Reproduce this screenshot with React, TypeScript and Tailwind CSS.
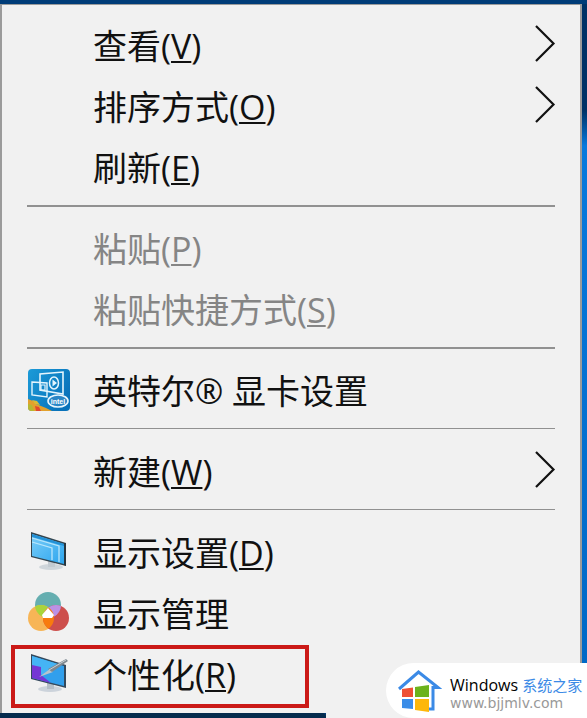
import type { ReactNode } from "react";
import { clsx } from "clsx";

// --- Icons ---

function IntelIcon() {
  return (
    <svg viewBox="0 0 42 42" className="size-[42px]" aria-hidden="true">
      <defs>
        <linearGradient id="intel-bg" x1="0" y1="0" x2="1" y2="0.6">
          <stop offset="0" stopColor="#1c9bd8" />
          <stop offset="1" stopColor="#0872ba" />
        </linearGradient>
        <clipPath id="intel-clip">
          <rect width="42" height="42" rx="4" />
        </clipPath>
      </defs>
      <g clipPath="url(#intel-clip)">
        <rect width="42" height="42" fill="url(#intel-bg)" />
        <path d="M0 30 5 32 8 35 13 37 18 39 24 42H0z" fill="#e2a12c" />
        <path d="M0 35 4 36 6 42H0z" fill="#b5b832" />
        <path d="M7 37l4 1 2 4H8z" fill="#e0492c" />
        <path d="M4 31l5 1 3 4-5-1z" fill="#d9bb35" />
      </g>
      <g fill="none" stroke="#e4f5fd">
        <path d="M12 13V5L35 3V25L12 21V13" strokeWidth="1.6" />
        <path d="M4 13 19 14V28L4 26z" strokeWidth="1.4" />
        <ellipse cx="26" cy="14" rx="4.5" ry="6" strokeWidth="1.5" />
        <path d="M13 16h4v5h-4z" strokeWidth="1.2" />
      </g>
      <path d="M24.500 10.500 29 14l-4.500 3.500z" fill="#e4f5fd" />
      <ellipse cx="30" cy="32" rx="10" ry="6" fill="#2a86c6" stroke="#e8f6fd" strokeWidth="1.6" />
      <text
        x="30"
        y="35"
        textAnchor="middle"
        fontSize="7"
        fontWeight="700"
        fontFamily="Liberation Sans, sans-serif"
        fill="#fff"
      >
        intel
      </text>
    </svg>
  );
}

function MonitorIcon() {
  return (
    <svg viewBox="0 0 42 42" className="size-[42px]" aria-hidden="true">
      <defs>
        <linearGradient id="screen" x1="0" y1="0" x2="1" y2="1">
          <stop offset="0" stopColor="#79cdf8" />
          <stop offset="1" stopColor="#2ca5ee" />
        </linearGradient>
      </defs>
      <ellipse cx="23" cy="36" rx="12" ry="3" fill="#cfd6db" />
      <path d="M20 30h7v6h-7z" fill="#c3cbd1" />
      <path d="M3 1 38 12V35L3 26z" fill="#34454f" />
      <path d="M4 3 36 13V33L4 25z" fill="url(#screen)" />
      <path d="M4 3 36 13V15L4 6z" fill="#2291d7" />
      <g fill="none" stroke="#b9e6fb" strokeWidth="1.3">
        <path d="M4 7 31 15V31" />
        <path d="M4 11 24 17V29" />
      </g>
      <path d="M36 12h2v23l-2-1z" fill="#28363e" />
    </svg>
  );
}

function ColorsIcon() {
  return (
    <svg viewBox="0 0 42 42" className="size-[42px]" aria-hidden="true">
      <defs>
        <clipPath id="teal">
          <circle cx="20" cy="13" r="13" />
        </clipPath>
        <clipPath id="amber">
          <circle cx="13" cy="26" r="13" />
        </clipPath>
      </defs>
      <circle cx="20" cy="13" r="13" fill="#65aeb0" />
      <circle cx="13" cy="26" r="13" fill="#f7b556" />
      <circle cx="28" cy="26" r="13" fill="#cd4f4c" />
      <circle cx="13" cy="26" r="13" fill="#a9d43b" clipPath="url(#teal)" />
      <circle cx="28" cy="26" r="13" fill="#bb91e4" clipPath="url(#teal)" />
      <g clipPath="url(#amber)">
        <circle cx="28" cy="26" r="13" fill="#f87b0e" />
      </g>
      <path d="M20 16 26 23 24 26H15L14 23z" fill="#fff" />
    </svg>
  );
}

function PersonalizeIcon() {
  return (
    <svg viewBox="0 0 42 42" className="size-[42px]" aria-hidden="true">
      <ellipse cx="22" cy="36" rx="12" ry="3" fill="#ccd3db" />
      <path d="M19 30h7v6h-7z" fill="#b5bec7" />
      <path d="M3 1 38 12V35L3 26z" fill="#34495c" />
      <path d="M4 3 36 13V33L4 25z" fill="#319fec" />
      <path d="M4 3 30 11 15 22 4 19z" fill="#45b4f5" />
      <path d="M4 12 13 14V22L23 30 4 25z" fill="#7536d4" />
      <path d="M11 24 22 16 25 19z" fill="#b9c2cc" />
      <path d="M20 16 38 6 40 8 24 19z" fill="#7d8890" />
      <path d="M21 17 38 7" stroke="#c7ced3" strokeWidth="1" />
    </svg>
  );
}

function Chevron() {
  return (
    <svg
      viewBox="0 0 22 40"
      className="h-10 w-[22px]"
      fill="none"
      stroke="#111"
      strokeWidth="2.200"
      aria-hidden="true"
    >
      <path d="M2 1 19.500 18.500 2 36" />
    </svg>
  );
}

function HouseLogo() {
  return (
    <svg viewBox="0 0 44 44" className="size-11 shrink-0" aria-hidden="true">
      <path
        d="M1 20 20.500 3 40 18.500H35V40H31"
        fill="none"
        stroke="#3b8ae6"
        strokeWidth="3"
      />
      <path d="M4 20 15 18.500V28H4z" fill="#ee5035" />
      <path d="M17 18 31 16V28H17z" fill="#6cb31d" />
      <path d="M4 30H15V40L4 39z" fill="#3b8de8" />
      <path d="M17 30H31V43L17 41z" fill="#fdb70b" />
    </svg>
  );
}

// --- Menu ---

interface MenuItemProps {
  children: ReactNode;
  accessKey?: string;
  icon?: ReactNode;
  submenu?: boolean;
  disabled?: boolean;
}

function MenuItem({ children, accessKey, icon, submenu, disabled }: MenuItemProps) {
  return (
    <button
      type="button"
      role="menuitem"
      disabled={disabled}
      aria-haspopup={submenu ? "menu" : undefined}
      className={clsx(
        "flex h-[61px] w-full items-center pl-[26px] pr-6 text-left text-[34px] leading-[56px]",
        disabled ? "text-[#858585]" : "text-[#111]",
      )}
    >
      <span className="w-[65px] shrink-0">{icon}</span>
      <span className="flex-1 whitespace-nowrap pt-0.5">
        {children}
        {accessKey && (
          <>
            (
            <span className="underline decoration-2 underline-offset-2 [text-decoration-skip-ink:none]">
              {accessKey}
            </span>
            )
          </>
        )}
      </span>
      {submenu && <Chevron />}
    </button>
  );
}

function Separator({ thin }: { thin?: boolean }) {
  return (
    <div role="separator" className="h-5 px-[25px] pt-2">
      <div className={clsx("bg-[#919191]", thin ? "h-px" : "h-0.5")} />
    </div>
  );
}

function Watermark() {
  return (
    <div className="absolute bottom-0 right-0 flex h-[55px] w-[201px] items-center gap-2 rounded-l-full bg-white pl-3">
      <HouseLogo />
      <div className="whitespace-nowrap pt-1">
        <p className="text-base leading-5 text-black">
          Windows <span className="text-[15px] text-[#3b8ae6]">系统之家</span>
        </p>
        <p className="font-['DejaVu_Sans'] text-sm leading-4 text-[#999]">www.bjjmlv.com</p>
      </div>
    </div>
  );
}

export default function App() {
  return (
    <div className="relative flex min-h-screen flex-col overflow-hidden bg-[#003c78] pt-1 font-['Open_Sans','Noto_Sans_CJK_SC',sans-serif]">
      <div className="flex">
        <div
          role="menu"
          className="flex-1 border-x-2 border-t border-[#9b9b9b] bg-[#f1f1f1] pb-[9px] pt-[9px]"
        >
          <MenuItem accessKey="V" submenu>查看</MenuItem>
          <MenuItem accessKey="O" submenu>排序方式</MenuItem>
          <MenuItem accessKey="E">刷新</MenuItem>
          <Separator />
          <MenuItem accessKey="P" disabled>粘贴</MenuItem>
          <MenuItem accessKey="S" disabled>粘贴快捷方式</MenuItem>
          <Separator />
          <MenuItem icon={<IntelIcon />}>英特尔® 显卡设置</MenuItem>
          <Separator thin />
          <MenuItem accessKey="W" submenu>新建</MenuItem>
          <Separator thin />
          <MenuItem accessKey="D" icon={<MonitorIcon />}>显示设置</MenuItem>
          <MenuItem icon={<ColorsIcon />}>显示管理</MenuItem>
          <div className="relative">
            <MenuItem accessKey="R" icon={<PersonalizeIcon />}>个性化</MenuItem>
            <div className="pointer-events-none absolute -bottom-1 left-[9px] h-[63px] w-[298px] border-4 border-[#cb1a17]" />
          </div>
        </div>
        <div className="w-[5px] bg-linear-to-b from-[#003266] from-15% via-[#0879dd] via-20% to-[#0067c4]" />
      </div>
      <div className="flex flex-1">
        <div className="w-[326px] rounded-tr bg-[#052b4d]" />
        <div className="flex-1 bg-[#f1f1f1]" />
      </div>
      <Watermark />
    </div>
  );
}
